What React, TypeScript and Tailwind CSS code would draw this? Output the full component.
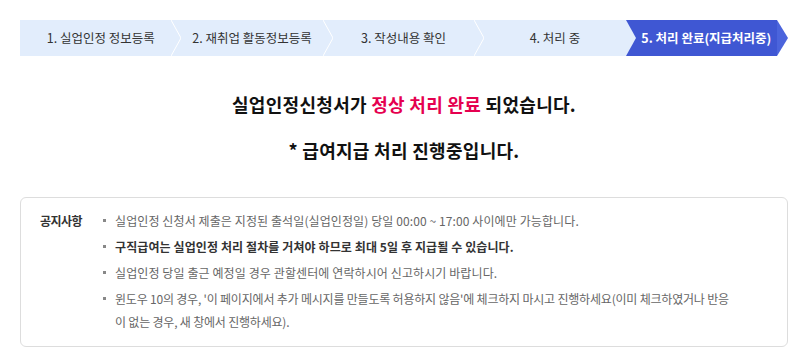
const steps = [
    '1. 실업인정 정보등록',
    '2. 재취업 활동정보등록',
    '3. 작성내용 확인',
    '4. 처리 중',
];

const notices = [
    { text: '실업인정 신청서 제출은 지정된 출석일(실업인정일) 당일 00:00 ~ 17:00 사이에만 가능합니다.' },
    { text: '구직급여는 실업인정 처리 절차를 거쳐야 하므로 최대 5일 후 지급될 수 있습니다.', bold: true },
    { text: '실업인정 당일 출근 예정일 경우 관할센터에 연락하시어 신고하시기 바랍니다.' },
];

const Chevron = ({ last }: { last: boolean }) => (
    <svg className="absolute left-full top-0 z-10" width="10" height="36" viewBox="0 0 10 36">
        <polygon points="0,0 10,18 0,36" fill="#e2edfc" />
        {!last && <polyline points="0,0 10,18 0,36" fill="none" stroke="#ffffff" strokeWidth="1" />}
    </svg>
);

const Bullet = () => (
    <span className="w-[12px] shrink-0 flex items-center h-[23px]">
        <span className="w-[3px] h-[3px] bg-[#888]" />
    </span>
);

export default function App() {
    return (
        <div className="w-[808px] h-[363px] bg-white pt-[20px] px-[20px]" style={{ fontFamily: '"Noto Sans CJK KR", "Noto Sans", sans-serif' }}>
            {/* Steps */}
            <div className="flex h-[36px] w-[768px]">
                {steps.map((s, i) => (
                    <div key={s} className="relative flex-1 flex items-center justify-center pl-[10px] bg-[#e2edfc] text-[12.5px] text-[#333]">
                        {s}
                        <Chevron last={i === steps.length - 1} />
                    </div>
                ))}
                <div className="flex-1 flex items-center justify-center pl-[10px] bg-[#3f57d3] text-[12.5px] font-bold text-white">
                    5. 처리 완료(지급처리중)
                </div>
                <svg width="11" height="36" viewBox="0 0 11 36" className="shrink-0">
                    <polygon points="0,0 11,18 0,36" fill="#4b64dc" />
                </svg>
            </div>

            {/* Message */}
            <p className="mt-[36px] text-center text-[18px] tracking-[0.3px] leading-[24px] font-bold text-[#111]">
                실업인정신청서가 <span className="text-[#e5004f]">정상 처리 완료</span> 되었습니다.
            </p>
            <p className="mt-[22px] text-center text-[18px] tracking-[0.3px] leading-[24px] font-bold text-[#111]">
                * 급여지급 처리 진행중입니다.
            </p>

            {/* Notice */}
            <div className="mt-[35px] border border-[#dddddd] rounded-md pt-[11px] pb-[13px] pl-[19px] pr-[12px] flex text-[12px] leading-[23px] tracking-[0.1px]">
                <div className="w-[63px] shrink-0 font-bold text-[#333] tracking-[-0.5px]">공지사항</div>
                <ul className="flex flex-col gap-[3px] text-[#666]">
                    {notices.map((n) => (
                        <li key={n.text} className="flex">
                            <Bullet />
                            <span className={n.bold ? 'font-bold text-[#333]' : ''}>{n.text}</span>
                        </li>
                    ))}
                    <li className="flex">
                        <Bullet />
                        <span className="tracking-[-0.2px]">
                            윈도우 10의 경우, '이 페이지에서 추가 메시지를 만들도록 허용하지 않음'에 체크하지 마시고 진행하세요(이미 체크하였거나 반응<br />
                            이 없는 경우, 새 창에서 진행하세요).
                        </span>
                    </li>
                </ul>
            </div>
        </div>
    );
}
